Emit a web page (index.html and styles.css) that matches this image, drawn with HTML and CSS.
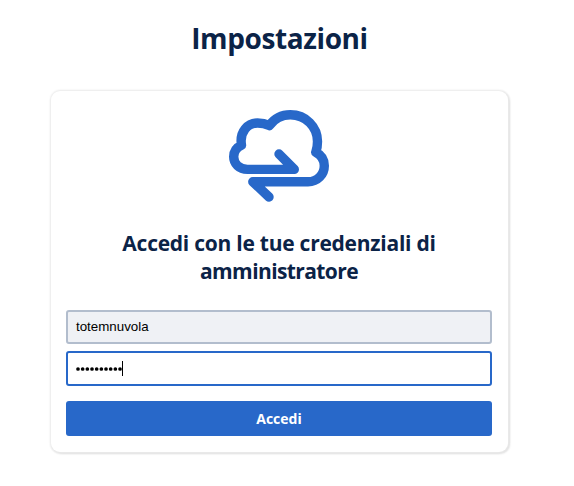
FILE: index.html
```html
<!DOCTYPE html>
<html lang="it">
<head>
<meta charset="utf-8">
<title>Impostazioni</title>
<link rel="stylesheet" href="styles.css">
</head>
<body>
<h1 class="title"><span>Impostazioni</span></h1>
<main class="card">
  <svg class="logo" viewBox="0 0 120 110" fill="none" stroke="currentColor" stroke-width="9.4" stroke-linecap="round" stroke-linejoin="round" aria-hidden="true">
    <path d="M59 54L74.3 69.4H27.5C19 69.4 13.7 63.5 13.7 56.8C13.7 51.5 16.7 47.3 21.5 45.2C19.2 31.5 28 23 37.5 23C42 23 46 24 49.3 25.6C54.5 18.5 62 14.8 70.3 14.8C86 14.8 97.5 27 97.5 41.5C97.5 45.5 97 49 95.8 52.2C101.3 55 104.3 60.2 104.3 65.7C104.3 74.5 97.5 81.8 88 81.8H32.8L49 97"/>
  </svg>
  <h2 class="heading"><span class="line-one">Accedi con le tue credenziali di</span> <span class="line-two">amministratore</span></h2>
  <form class="form">
    <div class="field field-filled">totemnuvola</div>
    <div class="field field-active">
      <svg class="dots" viewBox="0 0 46 4" aria-hidden="true"><path d="M2 2h0M6.67 2h0M11.34 2h0M16.01 2h0M20.68 2h0M25.35 2h0M30.02 2h0M34.69 2h0M39.36 2h0M44.03 2h0"/></svg>
      <span class="caret"></span>
    </div>
    <button class="submit" type="button">Accedi</button>
  </form>
</main>
</body>
</html>
```
FILE: styles.css
```css
* { box-sizing: border-box; }
body {
  display: flow-root;
  min-height: 486px;
  margin: 0;
  background: #fff;
  color: #0b2347;
  font-family: "Open Sans", "Noto Sans", sans-serif;
}
.title {
  margin: 18px 15px 0 0;
  height: 40px;
  font-size: 28px;
  line-height: 40px;
  font-weight: 700;
  letter-spacing: -0.4px;
  text-align: center;
}
.card {
  display: flex;
  flex-direction: column;
  width: 457px;
  height: 361px;
  margin: 33px 0 0 51px;
  padding: 9px 16px 15px 15px;
  border-radius: 9px;
  background: #fff;
  box-shadow: 0 0 2px 1px #ececec, 1px 1px 2px 1px #dedede;
}
.logo {
  display: block;
  width: 120px;
  height: 110px;
  margin-left: 154px;
  color: #2868c9;
}
.heading {
  margin: 19px 0 0;
  font-size: 21px;
  line-height: 28px;
  font-weight: 700;
  letter-spacing: -0.25px;
  text-align: center;
}
.heading span { display: block; }
.heading .line-two { letter-spacing: -0.6px; }
.form { margin-top: 25px; }
.field {
  display: flex;
  align-items: center;
  height: 34px;
  padding: 0 8px;
  border: 2px solid #b2bdcd;
  border-radius: 3px;
  color: #000;
  font: 13.33px "Liberation Sans", Arial, sans-serif;
}
.field-filled { padding-bottom: 2px; background: #eff1f5; }
.field-active {
  height: 35px;
  margin-top: 7px;
  border-color: #2868c9;
}
.dots {
  width: 46px;
  height: 4px;
  overflow: visible;
  fill: none;
  stroke: #000;
  stroke-width: 3.7;
  stroke-linecap: round;
}
.caret { width: 1px; height: 15px; background: #000; }
.submit {
  display: block;
  width: 100%;
  height: 35px;
  margin-top: 15px;
  padding: 0;
  border: 0;
  border-radius: 3px;
  background: #2868c9;
  color: #fff;
  font: 700 14px/35px "Open Sans", "Noto Sans", sans-serif;
}
```
